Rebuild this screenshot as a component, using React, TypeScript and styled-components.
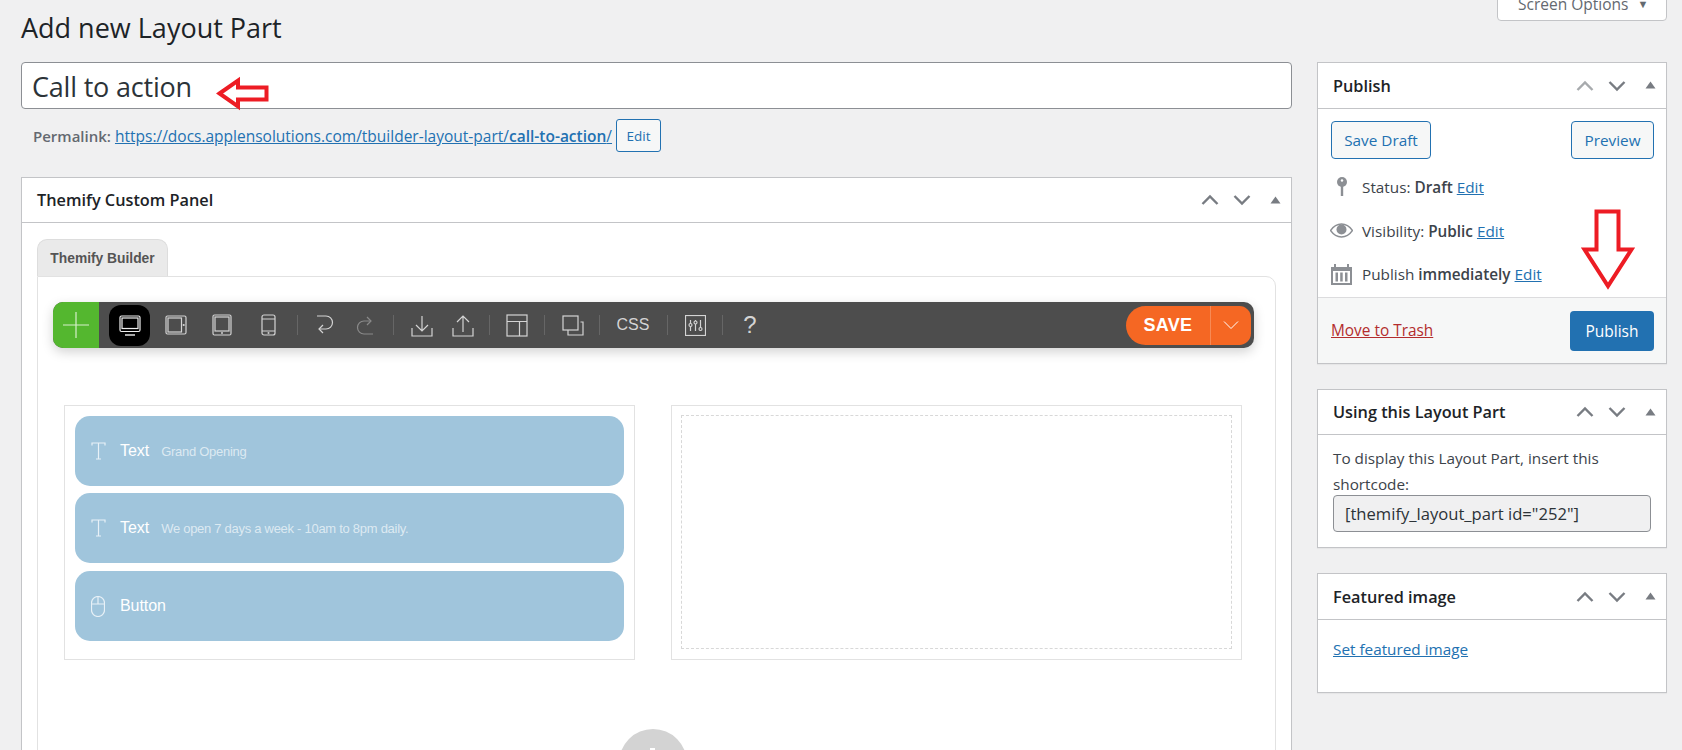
import React from "react";
import styled, { createGlobalStyle } from "styled-components";

const Global = createGlobalStyle`
  html, body { margin: 0; padding: 0; height: 750px; overflow: hidden; background: #f0f0f1; }
  * { box-sizing: border-box; }
  body { font-family: "Open Sans", "Noto Sans", sans-serif; color: #3c434a; font-size: 15px; }
`;

const Page = styled.div`
  display: flex;
  gap: 25px;
  padding: 0 15px 0 21px;
  width: 1682px;
  height: 750px;
  overflow: hidden;
`;
const Main = styled.main`
  width: 1271px;
  flex: none;
`;
const Side = styled.aside`
  width: 350px;
  flex: none;
`;
const Title = styled.h1`
  margin: 0;
  height: 62px;
  padding-top: 9px;
  font-size: 27px;
  line-height: 38px;
  font-weight: 400;
  color: #1d2327;
`;
const TitleBox = styled.div`
  position: relative;
  height: 47px;
  border: 1px solid #8c8f94;
  border-radius: 4px;
  background: #fff;
  padding-left: 10px;
  font-size: 27px;
  line-height: 47px;
  color: #2c3338;
  letter-spacing: -0.2px;
`;
const RedArrowOverlay = styled.svg`
  position: absolute;
  overflow: visible;
`;
const LeftArrowMark = styled(RedArrowOverlay)`
  left: 195px;
  top: 15px;
`;
const DownArrowMark = styled(RedArrowOverlay)`
  left: 263px;
  top: 146px;
  z-index: 2;
`;
const PermaRow = styled.div`
  display: flex;
  align-items: center;
  height: 33px;
  margin-top: 10px;
  padding-left: 12px;
  font-size: 15.5px;
  color: #646970;
  white-space: nowrap;
`;
const PermaLabel = styled.b`
  font-size: 15px;
  font-weight: 600;
  margin-right: 4px;
`;
const Link = styled.a`
  color: #2271b1;
  text-decoration: underline;
`;
const SmallBtn = styled.span`
  display: inline-flex;
  align-items: center;
  justify-content: center;
  width: 45px;
  height: 33px;
  margin-left: 4px;
  border: 1px solid #2271b1;
  border-radius: 3px;
  background: #f6f7f7;
  color: #2271b1;
  font-size: 13.5px;
`;
const Panel = styled.section<{ $top?: number; $h?: number }>`
  position: relative;
  background: #fff;
  border: 1px solid #c3c4c7;
  box-shadow: 0 1px 1px rgba(0, 0, 0, 0.04);
  margin-top: ${(p) => p.$top ?? 0}px;
  ${(p) => (p.$h ? `height: ${p.$h}px;` : "")}
`;
const BuilderPanel = styled(Panel)`
  margin-top: 25px;
  height: 700px;
`;
const PanelHead = styled.header<{ $h?: number }>`
  display: flex;
  align-items: center;
  justify-content: space-between;
  height: ${(p) => p.$h ?? 45}px;
  padding: 0 10px 0 15px;
  border-bottom: 1px solid #c3c4c7;
`;
const PanelTitle = styled.h2`
  margin: 0;
  font-size: 16.3px;
  font-weight: 600;
  color: #1d2327;
`;
const Controls = styled.div`
  display: flex;
  align-items: center;
  gap: 14px;
  & > svg:last-child { margin-left: 5px; margin-top: -1px; }
`;
const Builder = styled.div`
  padding: 16px 15px 0;
`;
const Tab = styled.div`
  width: 131px;
  height: 37px;
  display: flex;
  align-items: center;
  justify-content: center;
  background: #eaeaea;
  border: 1px solid #ddd;
  border-bottom: 0;
  border-radius: 10px 10px 0 0;
  font: bold 13.8px "Liberation Sans", Arial, sans-serif;
  color: #555;
`;
const Canvas = styled.div`
  position: relative;
  width: 1239px;
  height: 600px;
  border: 1px solid #e2e2e2;
  border-radius: 0 10px 0 0;
  padding: 25px 21px 0 15px;
`;
const Toolbar = styled.div`
  display: flex;
  align-items: center;
  height: 46px;
  background: #4d4d4d;
  border-radius: 10px;
  box-shadow: 0 4px 12px rgba(0, 0, 0, 0.18);
  color: #d0d0d0;
`;
const AddBtn = styled.div`
  width: 46px;
  height: 46px;
  margin-right: 8px;
  background: #54b72f;
  border-radius: 10px 0 0 10px;
  display: flex;
  align-items: center;
  justify-content: center;
  color: #d6efcb;
`;
const Slot = styled.div<{ $w: number; $active?: boolean }>`
  position: relative;
  width: ${(p) => p.$w}px;
  height: 46px;
  flex: none;
  display: flex;
  align-items: center;
  justify-content: center;
  color: ${(p) => (p.$active ? "#f0f0f0" : "#d4d4d4")};
  &::before {
    content: "";
    display: ${(p) => (p.$active ? "block" : "none")};
    position: absolute;
    left: 2px;
    top: 3px;
    width: 41px;
    height: 41px;
    border-radius: 12px;
    background: #000;
  }
  & > svg { position: relative; }
`;
const Sep = styled.div<{ $l: number; $r: number }>`
  width: 1px;
  height: 20px;
  background: #666;
  flex: none;
  margin: 0 ${(p) => p.$r}px 0 ${(p) => p.$l}px;
`;
const CssLabel = styled.span`
  font: 16px "Liberation Sans", Arial, sans-serif;
  color: #d4d4d4;
`;
const Help = styled.span`
  font: 24px "Liberation Sans", Arial, sans-serif;
  color: #d4d4d4;
  margin-left: -2px;
`;
const SaveGroup = styled.div`
  margin-left: auto;
  margin-right: 3px;
  width: 125px;
  height: 39px;
  display: flex;
  background: #f56723;
  border-radius: 20px 12px 12px 20px;
  color: #fff;
`;
const SaveText = styled.div`
  width: 85px;
  border-right: 1px solid #f78a55;
  display: flex;
  align-items: center;
  justify-content: center;
  font: bold 18px "Liberation Sans", Arial, sans-serif;
  letter-spacing: 0.3px;
`;
const SaveCaret = styled.div`
  flex: 1;
  display: flex;
  align-items: center;
  justify-content: center;
`;
const Rows = styled.div`
  display: flex;
  gap: 36px;
  margin-top: 57px;
  margin-left: 11px;
`;
const Col = styled.div`
  width: 571px;
  height: 255px;
  flex: none;
  border: 1px solid #e2e2e2;
  padding: 10px;
  display: flex;
  flex-direction: column;
`;
const Dashed = styled.div`
  flex: 1;
  border: 1px dashed #d8d8d8;
  margin-top: -1px;
  margin-bottom: 0;
  margin-left: -1px;
  margin-right: -1px;
`;
const Mod = styled.div<{ $mt?: number }>`
  height: 70px;
  margin-top: ${(p) => p.$mt ?? 0}px;
  display: flex;
  align-items: center;
  padding-left: 15px;
  border-radius: 15px;
  background: #a0c5dc;
  color: #fff;
  font-family: "Liberation Sans", Arial, sans-serif;
  white-space: nowrap;
`;
const ModIcon = styled.span`
  width: 16px;
  display: flex;
  justify-content: center;
  margin-right: 14px;
  color: #e8f1f7;
`;
const ModName = styled.span`
  font-size: 16px;
  letter-spacing: -0.05px;
`;
const ModSub = styled.span`
  margin-left: 12px;
  font-size: 13px;
  letter-spacing: -0.28px;
  color: rgba(255, 255, 255, 0.65);
`;
const AddCircle = styled.div`
  position: absolute;
  left: 581px;
  top: 452px;
  width: 68px;
  height: 68px;
  border-radius: 50%;
  background: #d3d3d3;
  &::before {
    content: "";
    position: absolute;
    left: 31px;
    top: 19px;
    width: 5px;
    height: 30px;
    background: #fff;
  }
  &::after {
    content: "";
    position: absolute;
    left: 19px;
    top: 31px;
    width: 30px;
    height: 5px;
    background: #fff;
  }
`;
const ScreenWrap = styled.div`
  height: 62px;
  display: flex;
  justify-content: flex-end;
`;
const ScreenBtn = styled.div`
  width: 170px;
  height: 30px;
  margin-top: -9px;
  border: 1px solid #c3c4c7;
  border-radius: 0 0 4px 4px;
  background: #fff;
  display: flex;
  align-items: center;
  padding: 0 0 5px 20px;
  font-size: 15.5px;
  color: #646970;
  gap: 9px;
`;
const Caret = styled.span`
  font-size: 11px;
`;
const BtnRow = styled.div`
  display: flex;
  justify-content: space-between;
  padding: 12px 12px 16px 13px;
`;
const GhostBtn = styled.div<{ $w: number }>`
  width: ${(p) => p.$w}px;
  height: 38px;
  display: flex;
  align-items: center;
  justify-content: center;
  border: 1px solid #2271b1;
  border-radius: 4px;
  background: #f6f7f7;
  color: #2271b1;
  font-size: 15.3px;
`;
const MetaList = styled.div`
  display: flex;
  flex-direction: column;
  gap: 19.5px;
`;
const Meta = styled.div`
  display: flex;
  align-items: center;
  height: 24px;
  padding-left: 12px;
  font-size: 15.3px;
  white-space: nowrap;
`;
const MetaIcon = styled.span`
  width: 23px;
  margin-right: 9px;
  display: flex;
  justify-content: center;
  color: #8c8f94;
`;
const Strong = styled.b`
  font-weight: 600;
`;
const Footer = styled.div`
  position: absolute;
  left: 0;
  right: 0;
  bottom: 0;
  height: 66px;
  display: flex;
  align-items: center;
  justify-content: space-between;
  padding: 0 12px 0 13px;
  border-top: 1px solid #dcdcde;
  background: #f6f7f7;
`;
const Trash = styled.a`
  color: #b32d2e;
  text-decoration: underline;
  font-size: 15.4px;
`;
const PrimaryBtn = styled.div`
  width: 84px;
  height: 40px;
  display: flex;
  align-items: center;
  justify-content: center;
  background: #2271b1;
  border-radius: 4px;
  color: #fff;
  font-size: 15.5px;
`;
const PanelBody = styled.div<{ $pt?: number }>`
  padding: ${(p) => p.$pt ?? 10}px 15px 0;
  font-size: 15.3px;
  line-height: 26px;
`;
const Shortcode = styled.div`
  height: 37px;
  margin: -2px 0 0 0;
  width: 318px;
  display: flex;
  align-items: center;
  padding-left: 11px;
  border: 1px solid #8c8f94;
  border-radius: 4px;
  background: #f0f0f1;
  color: #2c3338;
  font-size: 16.6px;
  white-space: nowrap;
`;

const s = { fill: "none", stroke: "currentColor", strokeWidth: 1.2 } as const;

const Up = ({ c }: { c: string }) => (
  <svg width="18" height="12" viewBox="0 0 18 12" style={{ color: c }}>
    <path d="M1.500 10 9 2.500 16.500 10" fill="none" stroke="currentColor" strokeWidth="2.400" />
  </svg>
);
const Down = ({ c }: { c: string }) => (
  <svg width="18" height="12" viewBox="0 0 18 12" style={{ color: c }}>
    <path d="M1.500 2 9 9.500 16.500 2" fill="none" stroke="currentColor" strokeWidth="2.400" />
  </svg>
);
const Tri = () => (
  <svg width="11" height="8" viewBox="0 0 11 8">
    <path d="M5.500 0.500 10.500 7.500H0.500Z" fill="#787c82" />
  </svg>
);
const Ctl = ({ first = "#787c82" }: { first?: string }) => (
  <Controls>
    <Up c={first} />
    <Down c="#787c82" />
    <Tri />
  </Controls>
);

const IconMonitor = () => (
  <svg width="22" height="21" viewBox="0 0 22 21" {...s}>
    <rect x="1" y="1" width="20" height="15.500" rx="1.500" />
    <rect x="3" y="3" width="16" height="10.500" />
    <path d="M6 20h10" strokeWidth="1.400" />
  </svg>
);
const IconTabletH = () => (
  <svg width="22" height="20" viewBox="0 0 22 20" {...s}>
    <rect x="1" y="1" width="20" height="18" rx="1.500" />
    <rect x="3" y="3" width="13.500" height="14" />
    <circle cx="18.700" cy="10" r=".5" />
  </svg>
);
const IconTabletV = () => (
  <svg width="20" height="22" viewBox="0 0 20 22" {...s}>
    <rect x="1" y="1" width="18" height="20" rx="1.500" />
    <rect x="3" y="3" width="14" height="14" />
    <circle cx="10" cy="19" r=".4" />
  </svg>
);
const IconPhone = () => (
  <svg width="15" height="22" viewBox="0 0 15 22" {...s}>
    <rect x="1" y="1" width="13" height="20" rx="2" />
    <path d="M1 5h13M1 17h13" />
    <circle cx="7.500" cy="19" r=".4" />
  </svg>
);
const IconUndo = () => (
  <svg width="18" height="22" viewBox="0 0 18 22" {...s}>
    <path d="M1 2h9a6.500 6.500 0 0 1 0 13H3" />
    <path d="M7 11l-4 4 4 4" />
  </svg>
);
const IconRedo = () => (
  <svg width="18" height="22" viewBox="0 0 18 22" {...s} style={{ color: "#8a8a8a" }}>
    <path d="M17 20H8a6.500 6.500 0 0 1 0-13h7" />
    <path d="M11 3l4 4-4 4" />
  </svg>
);
const IconImport = () => (
  <svg width="22" height="23" viewBox="0 0 22 23" {...s}>
    <path d="M1 14v8h20v-8M11 2v15M5 11l6 6 6-6" />
  </svg>
);
const IconExport = () => (
  <svg width="22" height="23" viewBox="0 0 22 23" {...s}>
    <path d="M1 14v8h20v-8M11 18V2M5 8l6-6 6 6" />
  </svg>
);
const IconLayout = () => (
  <svg width="22" height="23" viewBox="0 0 22 23" {...s}>
    <rect x="1" y="1" width="20" height="21" />
    <path d="M1 7.500h20M13.500 7.500V22" />
  </svg>
);
const IconDup = () => (
  <svg width="22" height="21" viewBox="0 0 22 21" {...s}>
    <rect x="1" y="1" width="15" height="14" />
    <path d="M18.500 7H21v13H6v-5" />
  </svg>
);
const IconSliders = () => (
  <svg width="21" height="21" viewBox="0 0 21 21" {...s}>
    <rect x=".5" y=".5" width="20" height="20" />
    <path d="M5.500 5v11M10.500 5v11M15.500 5v11" />
    <circle cx="5.500" cy="10" r="1.500" fill="#4d4d4d" />
    <circle cx="10.500" cy="7.500" r="1.500" fill="#4d4d4d" />
    <circle cx="15.500" cy="14" r="1.500" fill="#4d4d4d" />
  </svg>
);
const IconT = () => (
  <svg width="15" height="18" viewBox="0 0 15 18" {...s}>
    <path d="M1 3.500V1h13v2.500M7.500 1v16M5 17h5" />
  </svg>
);
const IconMouse = () => (
  <svg width="14" height="21" viewBox="0 0 14 21" {...s}>
    <rect x=".5" y=".5" width="13" height="20" rx="6.500" />
    <path d="M.5 8h13M7 .5V8" />
  </svg>
);
const IconPin = () => (
  <svg width="14" height="22" viewBox="0 0 14 22">
    <circle cx="7" cy="6" r="5" fill="#8c8f94" />
    <circle cx="7" cy="4.500" r="1.200" fill="#fff" />
    <path d="M7 9v11" stroke="#8c8f94" strokeWidth="2.400" />
  </svg>
);
const IconEye = () => (
  <svg width="23" height="15" viewBox="0 0 23 15">
    <path d="M.5 7.500C4 2.500 8 1 11.500 1S19 2.500 22.500 7.500C19 12.500 15 14 11.500 14S4 12.500 .5 7.500Z" fill="none" stroke="#8c8f94" strokeWidth="1.500" />
    <circle cx="11.500" cy="6.500" r="5" fill="#8c8f94" />
  </svg>
);
const IconCal = () => (
  <svg width="21" height="21" viewBox="0 0 21 21">
    <path d="M0 3h3V0h2v3h11V0h2v3h3v18H0Z" fill="#8c8f94" />
    <path d="M2 7h17v12H2Z" fill="#fff" />
    <path d="M4.500 8.500h2.500v9H4.500ZM9.200 8.500h2.500v9H9.200ZM14 8.500h2.500v9H14Z" fill="#8c8f94" />
  </svg>
);

export default function App() {
  return (
    <>
      <Global />
      <Page>
        <Main>
          <Title>Add new Layout Part</Title>
          <TitleBox>
            Call to action
            <LeftArrowMark width="52" height="31" viewBox="0 0 52 31">
              <path d="M2.500 15.500 21 2.500v7h28.500v12H21v7Z" fill="none" stroke="#ed1c24" strokeWidth="4" />
            </LeftArrowMark>
          </TitleBox>
          <PermaRow>
            <PermaLabel>Permalink:</PermaLabel>
            <Link>
              https://docs.applensolutions.com/tbuilder-layout-part/<Strong>call-to-action</Strong>/
            </Link>
            <SmallBtn>Edit</SmallBtn>
          </PermaRow>
          <BuilderPanel>
            <PanelHead>
              <PanelTitle>Themify Custom Panel</PanelTitle>
              <Ctl />
            </PanelHead>
            <Builder>
              <Tab>Themify Builder</Tab>
              <Canvas>
                <Toolbar>
                  <AddBtn>
                    <svg width="26" height="26" viewBox="0 0 26 26" fill="none" stroke="currentColor" strokeWidth="1.200">
                      <path d="M13 0v26M0 13h26" />
                    </svg>
                  </AddBtn>
                  <Slot $w={46} $active><IconMonitor /></Slot>
                  <Slot $w={46}><IconTabletH /></Slot>
                  <Slot $w={46}><IconTabletV /></Slot>
                  <Slot $w={46}><IconPhone /></Slot>
                  <Sep $l={6} $r={7} />
                  <Slot $w={40}><IconUndo /></Slot>
                  <Slot $w={40}><IconRedo /></Slot>
                  <Sep $l={8} $r={7} />
                  <Slot $w={41}><IconImport /></Slot>
                  <Slot $w={41}><IconExport /></Slot>
                  <Sep $l={6} $r={7} />
                  <Slot $w={40}><IconLayout /></Slot>
                  <Sep $l={7} $r={8} />
                  <Slot $w={40}><IconDup /></Slot>
                  <Sep $l={6} $r={8} />
                  <Slot $w={50}><CssLabel>CSS</CssLabel></Slot>
                  <Sep $l={9} $r={7} />
                  <Slot $w={40}><IconSliders /></Slot>
                  <Sep $l={7} $r={8} />
                  <Slot $w={40}><Help>?</Help></Slot>
                  <SaveGroup>
                    <SaveText>SAVE</SaveText>
                    <SaveCaret>
                      <svg width="16" height="10" viewBox="0 0 16 10" fill="none" stroke="#fff" strokeWidth="1">
                        <path d="M1 1.500 8 8.500 15 1.500" />
                      </svg>
                    </SaveCaret>
                  </SaveGroup>
                </Toolbar>
                <Rows>
                  <Col>
                    <Mod>
                      <ModIcon><IconT /></ModIcon>
                      <ModName>Text</ModName>
                      <ModSub>Grand Opening</ModSub>
                    </Mod>
                    <Mod $mt={7}>
                      <ModIcon><IconT /></ModIcon>
                      <ModName>Text</ModName>
                      <ModSub>We open 7 days a week - 10am to 8pm daily.</ModSub>
                    </Mod>
                    <Mod $mt={8}>
                      <ModIcon><IconMouse /></ModIcon>
                      <ModName>Button</ModName>
                    </Mod>
                  </Col>
                  <Col>
                    <Dashed />
                  </Col>
                </Rows>
                <AddCircle />
              </Canvas>
            </Builder>
          </BuilderPanel>
        </Main>
        <Side>
          <ScreenWrap>
            <ScreenBtn>
              Screen Options <Caret>▼</Caret>
            </ScreenBtn>
          </ScreenWrap>
          <Panel $h={302}>
            <PanelHead $h={46}>
              <PanelTitle>Publish</PanelTitle>
              <Ctl first="#a7aaad" />
            </PanelHead>
            <BtnRow>
              <GhostBtn $w={100}>Save Draft</GhostBtn>
              <GhostBtn $w={83}>Preview</GhostBtn>
            </BtnRow>
            <MetaList>
              <Meta>
                <MetaIcon><IconPin /></MetaIcon>
                <span>Status: <Strong>Draft</Strong> <Link>Edit</Link></span>
              </Meta>
              <Meta>
                <MetaIcon><IconEye /></MetaIcon>
                <span>Visibility: <Strong>Public</Strong> <Link>Edit</Link></span>
              </Meta>
              <Meta>
                <MetaIcon><IconCal /></MetaIcon>
                <span>Publish <Strong>immediately</Strong> <Link>Edit</Link></span>
              </Meta>
            </MetaList>
            <DownArrowMark width="54" height="81" viewBox="0 0 54 81">
              <path d="M15.500 2.500h22v38h13L27 77 3.500 40.500h12Z" fill="none" stroke="#ed1c24" strokeWidth="4" />
            </DownArrowMark>
            <Footer>
              <Trash>Move to Trash</Trash>
              <PrimaryBtn>Publish</PrimaryBtn>
            </Footer>
          </Panel>
          <Panel $top={25} $h={159}>
            <PanelHead>
              <PanelTitle>Using this Layout Part</PanelTitle>
              <Ctl />
            </PanelHead>
            <PanelBody>
              To display this Layout Part, insert this shortcode:
              <Shortcode>[themify_layout_part id="252"]</Shortcode>
            </PanelBody>
          </Panel>
          <Panel $top={25} $h={120}>
            <PanelHead $h={46}>
              <PanelTitle>Featured image</PanelTitle>
              <Ctl />
            </PanelHead>
            <PanelBody $pt={16}>
              <Link>Set featured image</Link>
            </PanelBody>
          </Panel>
        </Side>
      </Page>
    </>
  );
}
